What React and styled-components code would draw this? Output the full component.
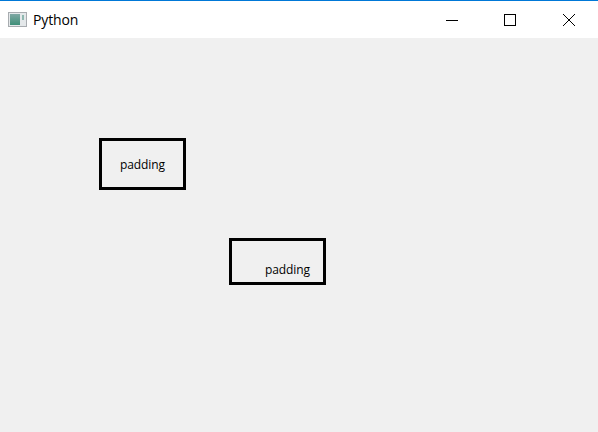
import styled, { createGlobalStyle } from "styled-components";

const GlobalStyle = createGlobalStyle`
  html, body {
    margin: 0;
    padding: 0;
    background: #f0f0f0;
  }
`;

const Window = styled.div`
  width: 598px;
  height: 432px;
  display: flex;
  flex-direction: column;
  overflow: hidden;
  background: #f0f0f0;
  font-family: "Open Sans", "Noto Sans", sans-serif;
  color: #000;
`;

const TitleBar = styled.div`
  height: 37px;
  flex: none;
  display: flex;
  align-items: center;
  background: #fff;
  border-top: 1px solid #0078d7;
`;

const AppIcon = styled.svg`
  width: 20px;
  height: 16px;
  margin-left: 8px;
  flex: none;
`;

const Title = styled.span`
  margin-left: 5px;
  font-size: 14px;
  letter-spacing: -0.15px;
  color: #000;
`;

const Controls = styled.div`
  margin-left: auto;
  display: flex;
`;

const ControlButton = styled.div`
  width: 58.5px;
  height: 37px;
  display: flex;
  align-items: center;
  justify-content: center;
`;

const Content = styled.div`
  flex: 1;
  display: flex;
  flex-direction: column;
  align-items: flex-start;
  gap: 48px;
  padding-top: 100px;
`;

const PaddedLabel = styled.div`
  box-sizing: border-box;
  width: ${({ $width }) => $width}px;
  height: ${({ $height }) => $height}px;
  margin-left: ${({ $left }) => $left}px;
  padding: ${({ $padding }) => $padding};
  border: 3px solid #000;
  font-size: 12px;
  line-height: 16px;
  letter-spacing: -0.1px;
`;

export default function App() {
  return (
    <>
      <GlobalStyle />
      <Window>
        <TitleBar>
          <AppIcon viewBox="0 0 20 16">
            <defs>
              <linearGradient id="appIconFill" x1="0" y1="0" x2="0" y2="1">
                <stop offset="0" stopColor="#7fa8a4" />
                <stop offset="1" stopColor="#3f8f78" />
              </linearGradient>
            </defs>
            <rect x="0.5" y="0.5" width="18" height="14" fill="#e4e8ea" stroke="#a8acb0" />
            <rect x="2" y="2" width="10" height="11" fill="url(#appIconFill)" />
            <rect x="14" y="3" width="2" height="5" fill="#8fb8b0" />
          </AppIcon>
          <Title>Python</Title>
          <Controls>
            <ControlButton>
              <svg width="12" height="12" viewBox="0 0 12 12">
                <path d="M0 6.5H12" stroke="#000" strokeWidth="1" />
              </svg>
            </ControlButton>
            <ControlButton>
              <svg width="12" height="12" viewBox="0 0 12 12">
                <rect x="0.5" y="0.5" width="11" height="11" fill="none" stroke="#000" />
              </svg>
            </ControlButton>
            <ControlButton>
              <svg width="14" height="14" viewBox="0 0 14 14">
                <path d="M1 1L13 13M13 1L1 13" stroke="#000" strokeWidth="1" />
              </svg>
            </ControlButton>
          </Controls>
        </TitleBar>
        <Content>
          <PaddedLabel $left={99} $width={87} $height={52} $padding="16px 18px 0">
            padding
          </PaddedLabel>
          <PaddedLabel $left={229} $width={97} $height={47} $padding="21px 13px 0 33px">
            padding
          </PaddedLabel>
        </Content>
      </Window>
    </>
  );
}
